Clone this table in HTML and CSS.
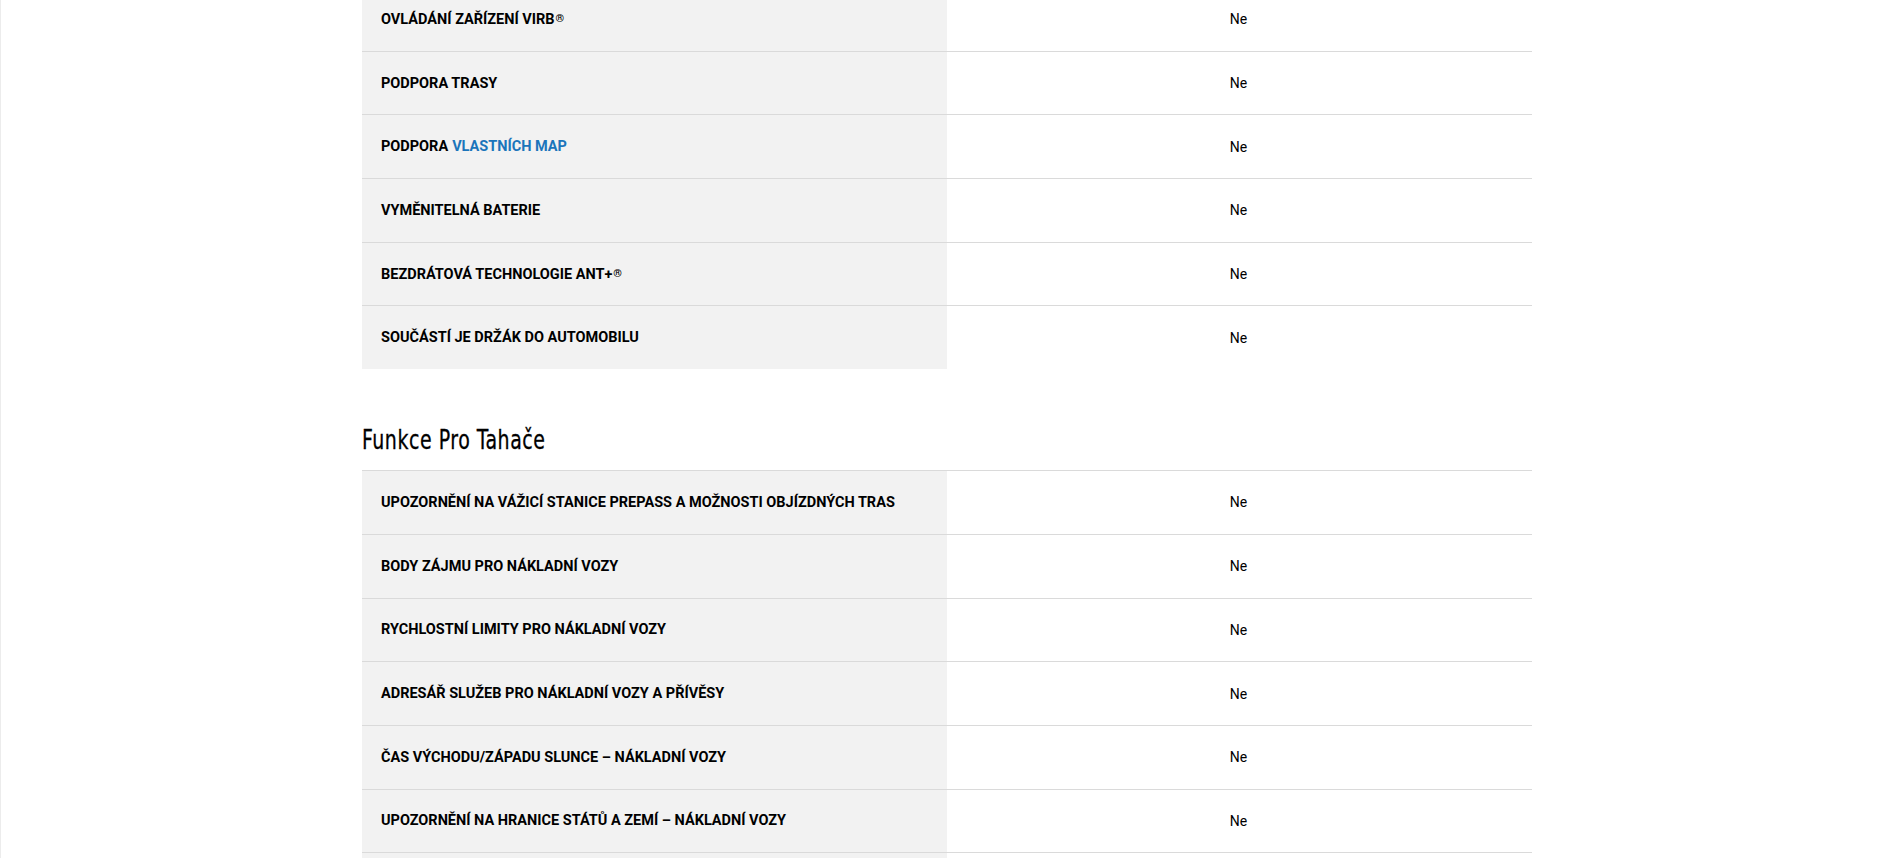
FILE: index.html
```html
<!DOCTYPE html>
<html lang="cs">
<head>
<meta charset="utf-8">
<title>Specifikace</title>
<link rel="stylesheet" href="styles.css">
</head>
<body>
<div class="page">
  <div class="container">
    <section class="spec">
      <div class="spec-table">
        <div class="row"><div class="label">Ovládání zařízení VIRB<sup>®</sup></div><div class="value">Ne</div></div>
        <div class="row"><div class="label">Podpora trasy</div><div class="value">Ne</div></div>
        <div class="row"><div class="label">Podpora <a href="#" class="link">vlastních map</a></div><div class="value">Ne</div></div>
        <div class="row"><div class="label">Vyměnitelná baterie</div><div class="value">Ne</div></div>
        <div class="row"><div class="label">Bezdrátová technologie ANT+<sup>®</sup></div><div class="value">Ne</div></div>
        <div class="row"><div class="label">Součástí je držák do automobilu</div><div class="value">Ne</div></div>
      </div>
    </section>
    <section class="spec">
      <h2 class="spec-title"><span class="spec-title-text">Funkce Pro Tahače</span></h2>
      <div class="spec-table">
        <div class="row"><div class="label">Upozornění na vážicí stanice PrePass a možnosti objízdných tras</div><div class="value">Ne</div></div>
        <div class="row"><div class="label">Body zájmu pro nákladní vozy</div><div class="value">Ne</div></div>
        <div class="row"><div class="label">Rychlostní limity pro nákladní vozy</div><div class="value">Ne</div></div>
        <div class="row"><div class="label">Adresář služeb pro nákladní vozy a přívěsy</div><div class="value">Ne</div></div>
        <div class="row"><div class="label">Čas východu/západu slunce – nákladní vozy</div><div class="value">Ne</div></div>
        <div class="row"><div class="label">Upozornění na hranice států a zemí – nákladní vozy</div><div class="value">Ne</div></div>
        <div class="row"><div class="label"></div><div class="value"></div></div>
      </div>
    </section>
  </div>
</div>
</body>
</html>
```

FILE: styles.css
```css
html, body {
  margin: 0;
  padding: 0;
  background: #ffffff;
}
body {
  height: 858px;
  overflow: hidden;
  border-left: 1px solid #ececec;
  font-family: Roboto, "Liberation Sans", Arial, sans-serif;
  color: #000;
}
.page {
  margin-top: -13px;
}
.container {
  width: 1170px;
  margin: 0 auto;
}
.spec-table {
  display: flex;
  flex-direction: column;
}
.row {
  display: grid;
  grid-template-columns: 1fr 1fr;
  height: 62.7px;
  border-top: 1px solid #dadada;
}
.label {
  background: #f2f2f2;
  display: flex;
  align-items: center;
  padding-left: 19px;
  font-size: 14.5px;
  font-weight: 700;
  text-transform: uppercase;
}
.label sup {
  font-size: 11px;
  line-height: 0;
  vertical-align: 4px;
  margin-left: 1px;
}
.link {
  color: #1b75bb;
  text-decoration: none;
  margin-left: 4px;
}
.value {
  display: flex;
  align-items: center;
  justify-content: center;
  font-size: 14px;
  font-weight: 400;
  padding-right: 2px;
}
.spec-title {
  margin: 53px 0 0;
  height: 48px;
  box-sizing: border-box;
  padding-bottom: 13px;
  display: flex;
  align-items: center;
  font-family: "DejaVu Sans Condensed", "DejaVu Sans", sans-serif;
  font-stretch: condensed;
  font-weight: 400;
  font-size: 27px;
  letter-spacing: 0.7px;
  color: #000;
  -webkit-text-stroke: 0.3px #000;
}
.spec-title-text {
  display: inline-block;
  transform: scaleX(0.78);
  transform-origin: left center;
  white-space: nowrap;
}
```
